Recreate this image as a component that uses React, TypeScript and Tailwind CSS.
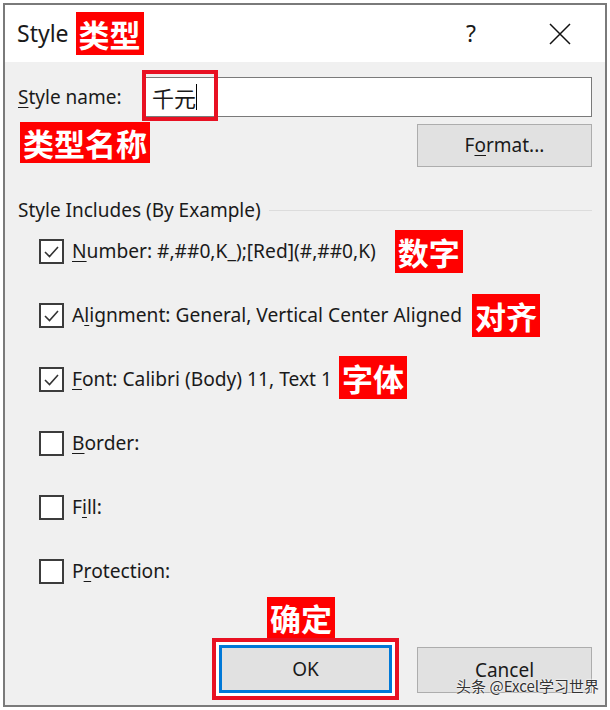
import React from "react"

const ui = "font-['Noto_Sans','Noto_Sans_CJK_SC',sans-serif]"
const cjk = "font-['Noto_Sans_CJK_SC',sans-serif]"

// red annotation chip pasted on top of the screenshot
function Tag({ text, className = "" }: { text: string; className?: string }) {
  return (
    <span
      className={`${cjk} inline-block shrink-0 bg-[#ff0000] px-[3px] text-[31px] leading-[43px] font-bold text-white ${className}`}
    >
      {text}
    </span>
  )
}

function Check({ checked }: { checked: boolean }) {
  return (
    <span className="flex h-[25px] w-[25px] shrink-0 items-center justify-center border-2 border-[#3c3c3c] bg-white">
      {checked && (
        <svg width="17" height="17" viewBox="0 0 17 17">
          <path d="M2 9 L6.5 13.5 L15 4" fill="none" stroke="#333" strokeWidth="1.6" />
        </svg>
      )}
    </span>
  )
}

const rows = [
  { key: "N", rest: "umber: #,##0,K_);[Red](#,##0,K)", checked: true, tag: "数字", gap: "ml-[19px]" },
  { key: "l", pre: "A", rest: "ignment: General, Vertical Center Aligned", checked: true, tag: "对齐", gap: "ml-[10px]" },
  { key: "F", rest: "ont: Calibri (Body) 11, Text 1", checked: true, tag: "字体", gap: "ml-[7px] -mt-[3px]" },
  { key: "B", rest: "order:", checked: false },
  { key: "i", pre: "F", rest: "ll:", checked: false },
  { key: "r", pre: "P", rest: "otection:", checked: false },
]

export default function App() {
  return (
    <div className="h-[710px] w-[610px] bg-white p-[3px]">
      <div className={`${ui} flex h-full flex-col border-2 border-[#7a7a7a] bg-[#f0f0f0] text-[#1a1a1a]`}>
        {/* title bar */}
        <div className="flex h-[57px] shrink-0 items-center bg-white pl-[12px] pr-[34px]">
          <span className="text-[23px]">Style</span>
          <Tag text="类型" className="ml-[7px]" />
          <span className="ml-auto mr-[73px] text-[23px]">?</span>
          <svg width="22" height="22" viewBox="0 0 22 22">
            <path d="M1 1 L21 21 M21 1 L1 21" stroke="#111" strokeWidth="1.5" />
          </svg>
        </div>

        <div className="flex flex-1 flex-col px-[13px]">
          {/* style name */}
          <div className="mt-[15px] flex h-[40px] shrink-0 items-center">
            <span className="w-[126px] text-[19px]">
              <span className="underline underline-offset-[3px]">S</span>tyle name:
            </span>
            <div className="relative flex h-[40px] flex-1 items-center border border-[#7a7a7a] bg-white pl-[7px]">
              <span className={`${cjk} text-[22px]`}>千元</span>
              <span className="h-[26px] w-px bg-black" />
              <span className="absolute left-[-3px] top-[-8px] h-[51px] w-[76px] border-[4px] border-[#e81123]" />
            </div>
          </div>

          <div className="mt-[5px] flex h-[45px] shrink-0 items-start justify-between">
            <Tag text="类型名称" className="ml-[2px] !leading-[41px]" />
            <button className="mt-[2px] h-[43px] w-[175px] border border-[#adadad] bg-[#e1e1e1] text-[19px]">
              F<span className="underline underline-offset-[3px]">o</span>rmat...
            </button>
          </div>

          {/* group */}
          <div className="mt-[30px] flex h-[26px] shrink-0 items-center">
            <span className="text-[19px] leading-[26px]">Style Includes (By Example)</span>
            <span className="ml-[8px] h-px flex-1 bg-[#dcdcdc]" />
          </div>

          <div className="mt-[8px] flex flex-col gap-[24px] pl-[21px]">
            {rows.map((r) => (
              <div key={r.rest} className="flex h-[40px] items-center">
                <Check checked={r.checked} />
                <span className="ml-[8px] text-[19.2px] whitespace-nowrap">
                  {r.pre}
                  <span className="underline underline-offset-[3px]">{r.key}</span>
                  {r.rest}
                </span>
                {r.tag && <Tag text={r.tag} className={r.gap} />}
              </div>
            ))}
          </div>

          {/* footer */}
          <div className="mt-[6px] mb-[5px] flex items-end justify-end">
            <div className="mr-[1px] flex flex-col items-start">
              <Tag text="确定" className="mb-[-1px] ml-[55px] !leading-[42px]" />
              <div className="border-[4px] border-[#e81123] bg-white p-[3px]">
                <button className="h-[48px] w-[173px] border-[3px] border-[#0078d7] bg-[#e1e1e1] text-[19px]">OK</button>
              </div>
            </div>
            <div className="relative mb-[7px] ml-[17px]">
              <button className="h-[46px] w-[175px] border border-[#adadad] bg-[#e1e1e1] text-[19px]">Cancel</button>
              <span
                className={`${cjk} absolute bottom-[-4px] right-[-7px] whitespace-nowrap text-[15px] text-[#333] [text-shadow:0_0_2px_#fff,0_0_2px_#fff]`}
              >
                头条 @Excel学习世界
              </span>
            </div>
          </div>
        </div>
      </div>
    </div>
  )
}
